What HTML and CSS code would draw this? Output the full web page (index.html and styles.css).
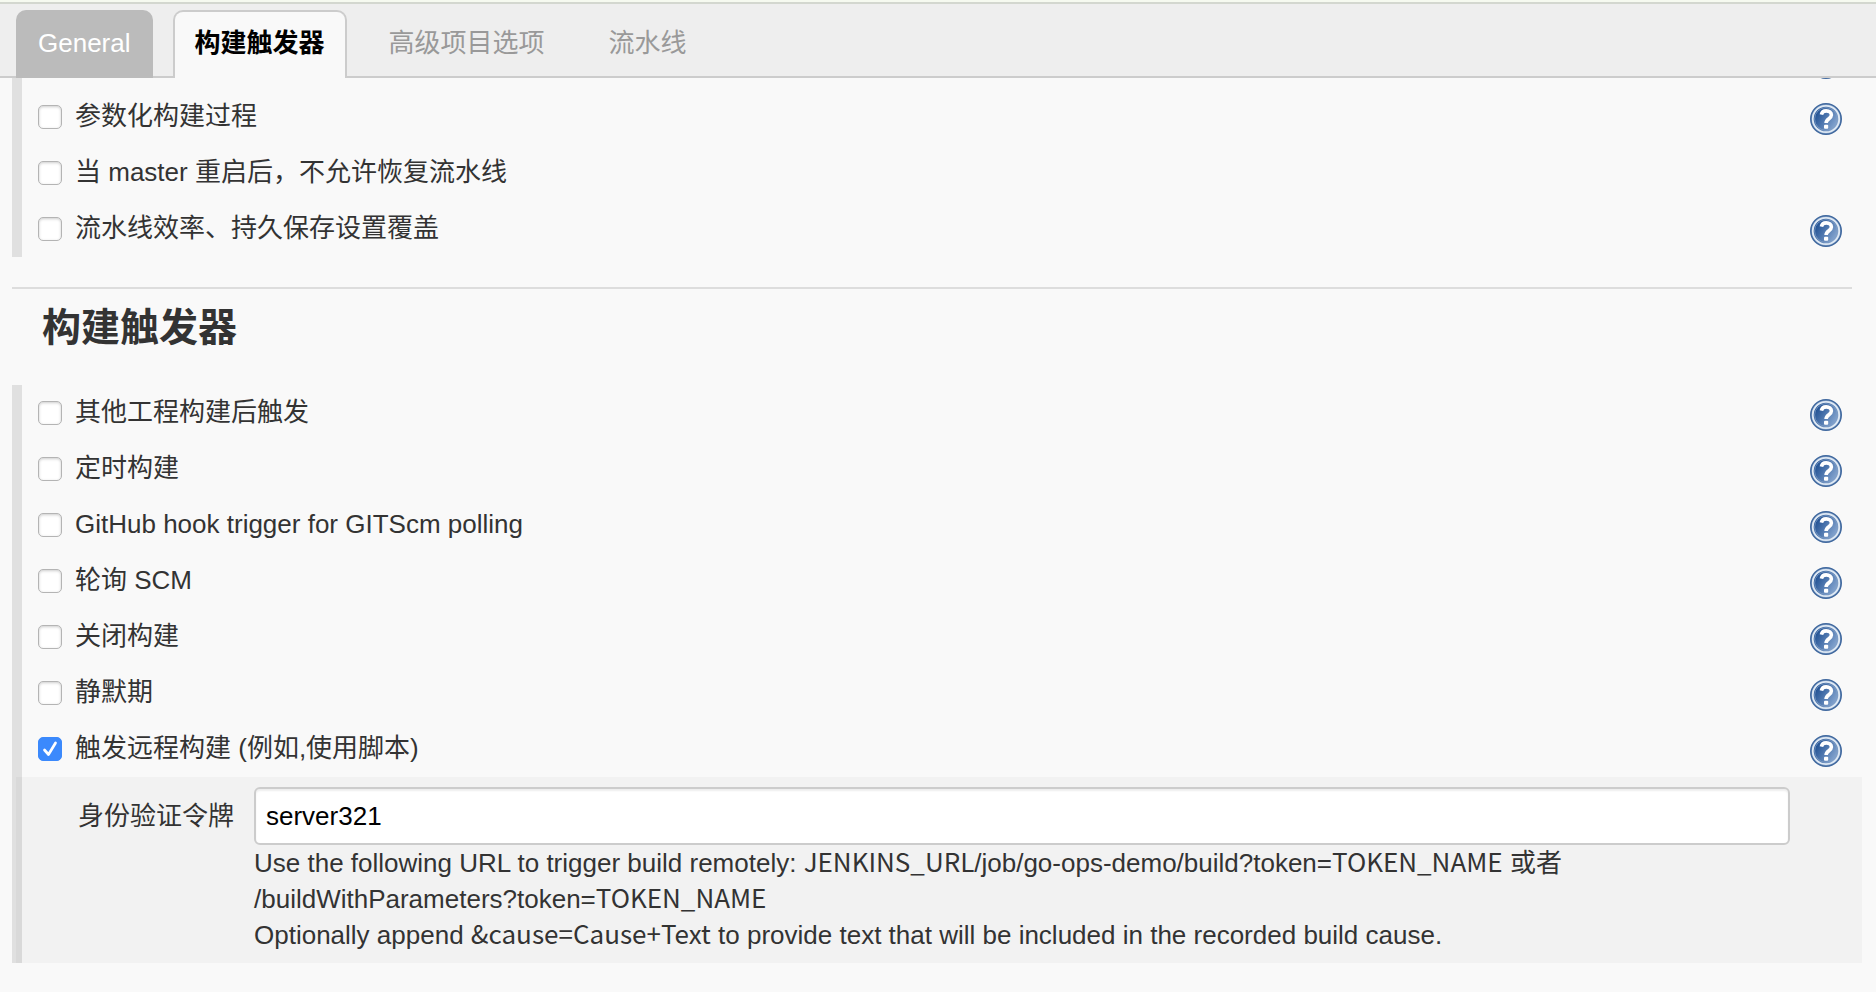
FILE: index.html
```html
<!DOCTYPE html>
<html lang="zh-CN">
<head>
<meta charset="utf-8">
<title>构建触发器</title>
<link rel="stylesheet" href="styles.css">
</head>
<body>
<svg class="sprite" aria-hidden="true">
  <defs>
    <linearGradient id="blue" x1="0" y1="0.2" x2="1" y2="0.8">
      <stop offset="0.1" stop-color="#1f4f92"/>
      <stop offset="0.9" stop-color="#86a6d0"/>
    </linearGradient>
    <symbol id="help" viewBox="0 0 32 32">
      <circle cx="16" cy="16" r="15.200" fill="#8fabcd" stroke="#41699f" stroke-width="1.600"/>
      <circle cx="16" cy="16" r="13.200" fill="url(#blue)" stroke="#dfe9f4" stroke-width="1.800"/>
      <circle cx="16" cy="16" r="11.400" fill="none" stroke="#7f9dc4" stroke-width="0.800"/>
      <path d="M11.400 11.600c.5-2.600 2.300-3.700 4.800-3.700 3 0 5.200 1.600 5.200 4.200 0 3.700-5.300 3.700-5.300 8" fill="none" stroke="#fff" stroke-width="3.600"/>
      <rect x="14" y="21.800" width="4.200" height="4" rx="1" fill="#fff"/>
    </symbol>
  </defs>
</svg>

<header class="tabbar">
  <nav class="tabs">
    <button class="tab tab-visited" type="button">General</button>
    <button class="tab tab-active" type="button">构建触发器</button>
    <button class="tab" type="button">高级项目选项</button>
    <button class="tab" type="button">流水线</button>
  </nav>
</header>

<form class="config">
  <section class="group">
    <div class="row"><button class="help" type="button" aria-label="Help"><svg><use href="#help"/></svg></button></div>
    <div class="row"><label class="option"><input type="checkbox">参数化构建过程</label><button class="help" type="button" aria-label="Help"><svg><use href="#help"/></svg></button></div>
    <div class="row"><label class="option"><input type="checkbox">当 master 重启后，不允许恢复流水线</label></div>
    <div class="row"><label class="option"><input type="checkbox">流水线效率、持久保存设置覆盖</label><button class="help" type="button" aria-label="Help"><svg><use href="#help"/></svg></button></div>
  </section>

  <h2 class="heading">构建触发器</h2>

  <section class="group">
    <div class="row"><label class="option"><input type="checkbox">其他工程构建后触发</label><button class="help" type="button" aria-label="Help"><svg><use href="#help"/></svg></button></div>
    <div class="row"><label class="option"><input type="checkbox">定时构建</label><button class="help" type="button" aria-label="Help"><svg><use href="#help"/></svg></button></div>
    <div class="row"><label class="option"><input type="checkbox">GitHub hook trigger for GITScm polling</label><button class="help" type="button" aria-label="Help"><svg><use href="#help"/></svg></button></div>
    <div class="row"><label class="option"><input type="checkbox">轮询 SCM</label><button class="help" type="button" aria-label="Help"><svg><use href="#help"/></svg></button></div>
    <div class="row"><label class="option"><input type="checkbox">关闭构建</label><button class="help" type="button" aria-label="Help"><svg><use href="#help"/></svg></button></div>
    <div class="row"><label class="option"><input type="checkbox">静默期</label><button class="help" type="button" aria-label="Help"><svg><use href="#help"/></svg></button></div>
    <div class="row"><label class="option"><input type="checkbox" checked>触发远程构建 (例如,使用脚本)</label><button class="help" type="button" aria-label="Help"><svg><use href="#help"/></svg></button></div>
    <div class="panel">
      <label class="panel-label" for="token">身份验证令牌</label>
      <div class="panel-field">
        <input class="text-input" id="token" type="text" value="server321">
        <p class="hint">Use the following URL to trigger build remotely: <code>JENKINS_URL</code>/job/go-ops-demo/build?token=<code>TOKEN_NAME</code> 或者<br>/buildWithParameters?token=<code>TOKEN_NAME</code><br>Optionally append <code>&amp;cause=Cause+Text</code> to provide text that will be included in the recorded build cause.</p>
      </div>
    </div>
  </section>
</form>
</body>
</html>
```
FILE: styles.css
```css
* { box-sizing: border-box; }

body {
  margin: 0;
  background: #f9f9f9;
  color: #333;
  font: 26px/36px "Liberation Sans", "Noto Sans CJK SC", sans-serif;
}

button, input { font: inherit; margin: 0; }

.sprite { position: absolute; width: 0; height: 0; }

.tabbar {
  position: fixed;
  top: 0;
  left: 0;
  right: 0;
  z-index: 1;
  padding-top: 2px;
  background: #f6faf0;
}

.tabs {
  display: flex;
  gap: 20px;
  height: 76px;
  padding: 6px 16px 0;
  background: #eee;
  border-top: 2px solid #d3d7cf;
  border-bottom: 2px solid #ccc;
}

.tab {
  height: 68px;
  padding: 0 20px 4px;
  border: 2px solid transparent;
  border-bottom: 0;
  border-radius: 10px 10px 0 0;
  background: none;
  color: #999;
  white-space: nowrap;
}

.tab-visited { background: #bbb; border-color: #bbb; color: #fff; }

.tab-active {
  background: #f9f9f9;
  border-color: #ccc;
  color: #000;
  font-weight: bold;
}

.config { padding: 33px 24px 29px 12px; }

.group { border-left: 10px solid #e0e0e0; }

.row {
  display: flex;
  align-items: flex-start;
  height: 56px;
  padding: 0 10px 0 16px;
}

.option {
  display: flex;
  align-items: flex-start;
  gap: 13px;
  padding-top: 9px;
}

.option input {
  appearance: none;
  width: 24px;
  height: 24px;
  margin-top: 7px;
  border: 1px solid #b4b4b4;
  border-radius: 5px;
  background: #fff;
  box-shadow: inset 0 1px 3px #ccc;
}

.option input:checked {
  border-color: #3b89fc;
  background: #3b89fc url("data:image/svg+xml,%3Csvg xmlns='http://www.w3.org/2000/svg' viewBox='0 0 24 24'%3E%3Cpath d='M6.500 13l4 4.500 7-11.500' fill='none' stroke='%23fff' stroke-width='2.700' stroke-linecap='round' stroke-linejoin='round'/%3E%3C/svg%3E") center / 24px 24px;
  box-shadow: none;
}

.help {
  width: 32px;
  height: 32px;
  margin: 14px 0 0 auto;
  padding: 0;
  border: 0;
  background: none;
}

.help svg { display: block; width: 32px; height: 32px; }

.heading {
  margin: 30px 0 0;
  padding: 10px 30px 28px;
  border-top: 2px solid #ddd;
  font-size: 39px;
  line-height: 58px;
}

.panel {
  display: flex;
  margin: 0 -10px 0 -6px;
  padding: 10px 72px 10px 62px;
  background: rgba(0, 0, 0, 0.027);
}

.panel-label { flex: none; width: 176px; padding-top: 11px; }

.panel-field { flex: 1; }

.text-input {
  display: block;
  width: 100%;
  height: 58px;
  padding: 0 10px;
  border: 2px solid #ccc;
  border-radius: 6px;
  background: #fff;
  box-shadow: inset 0 2px 2px #eee;
  color: #000;
}

.hint { margin: 0; }

.hint code { font-family: "Noto Sans CJK SC", sans-serif; line-height: 1px; }
```
